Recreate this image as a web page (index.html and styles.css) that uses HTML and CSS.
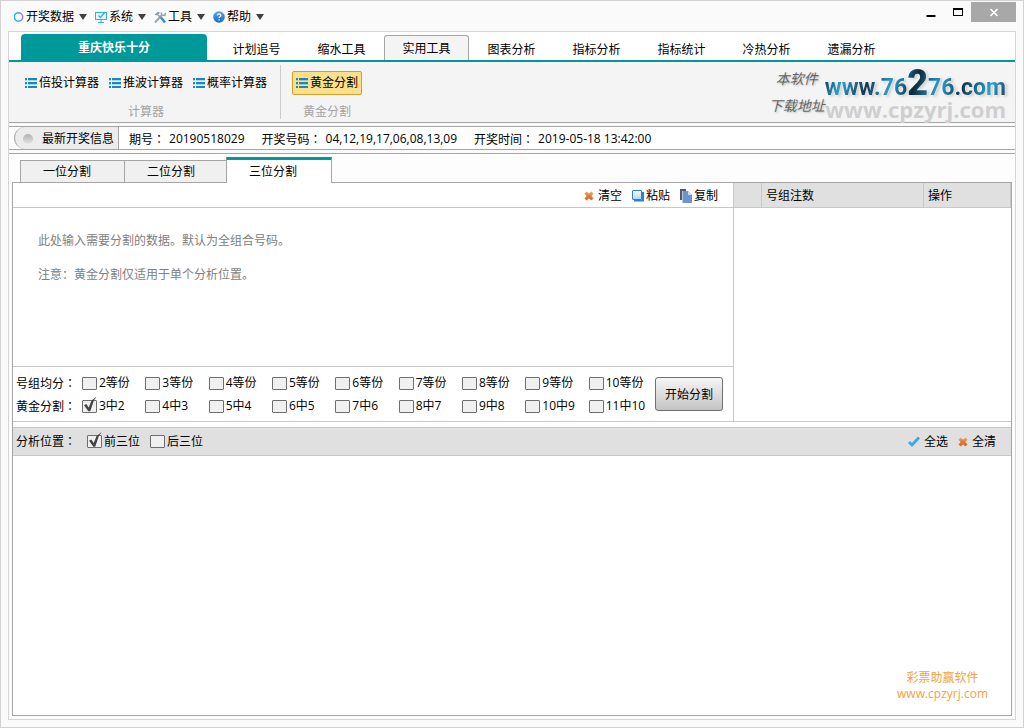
FILE: index.html
```
<!DOCTYPE html>
<html lang="zh-CN">
<head>
    <meta charset="UTF-8">
    <meta name="viewport" content="width=device-width, initial-scale=1.0">
    <title>重庆快乐十分 - 黄金分割</title>
    <link rel="stylesheet" href="styles.css">
</head>
<body>
    <!-- shared icons -->
    <svg class="sprite" aria-hidden="true">
        <defs>
            <linearGradient id="ring" x1="0" x2="1" y1="0" y2="0"><stop offset="0.3" stop-color="#1fb0f0"/><stop offset="1" stop-color="#b07be0"/></linearGradient>
            <linearGradient id="help" x1="0" x2="0" y1="0" y2="1"><stop offset="0" stop-color="#55a8ea"/><stop offset="1" stop-color="#1769bd"/></linearGradient>
            <linearGradient id="orange" x1="0" x2="0" y1="0" y2="1"><stop offset="0" stop-color="#f09a4a"/><stop offset="1" stop-color="#d9591c"/></linearGradient>
            <linearGradient id="sheet" x1="0" x2="0" y1="0" y2="1"><stop offset="0" stop-color="#ffffff"/><stop offset="1" stop-color="#a9d4fb"/></linearGradient>
        </defs>
        <symbol id="icon-list" viewBox="0 0 12 12">
            <path d="M0 1h2v2H0zM0 5h2v2H0zM0 9h2v2H0zM3 1h9v2H3zM3 5h9v2H3zM3 9h9v2H3z" fill="#1b87c0"/>
            <path d="M0 3h2v1H0zM0 7h2v1H0zM3 3h9v1H3zM3 7h9v1H3z" fill="#1b87c0" opacity="0.3"/>
        </symbol>
        <symbol id="icon-cross" viewBox="0 0 10 10">
            <path d="M1 2.6L2.6 1 5 3.2 7.4 1 9 2.6 6.9 5 9 7.4 7.4 9 5 6.8 2.6 9 1 7.4 3.1 5z" fill="url(#orange)" stroke="url(#orange)" stroke-width="0.8"/>
        </symbol>
    </svg>

    <div class="window">
        <header class="title-bar">
            <nav class="menu">
                <button class="menu-item">
                    <svg width="10" height="12" viewBox="0 0 10 12"><circle cx="4.5" cy="6" r="4.2" fill="none" stroke="url(#ring)" stroke-width="1.6"/></svg>
                    <span>开奖数据</span><i class="arrow"></i>
                </button>
                <button class="menu-item">
                    <svg width="12" height="12" viewBox="0 0 12 12"><rect x="0.5" y="1.5" width="11" height="7" fill="#e8f7ff" stroke="#35aee8"/><path d="M3 11.5h6M6 9v2" stroke="#35aee8" fill="none"/><path d="M3.5 4.5l2 2 4.5-5.5" stroke="#35aee8" stroke-width="1.4" fill="none"/></svg>
                    <span>系统</span><i class="arrow"></i>
                </button>
                <button class="menu-item">
                    <svg width="12" height="12" viewBox="0 0 12 12"><path d="M1 11.5L8 4" stroke="#9aa7b1" stroke-width="2" fill="none"/><path d="M7 1.5l1 2.5 3 .5.5-2.5" stroke="#9aa7b1" stroke-width="1.5" fill="none"/><path d="M0.5 3.5L4 .8l2 1L3 4.5z" fill="#8a99a6"/><path d="M4 4l3 3" stroke="#8a99a6" stroke-width="1.4"/><path d="M7 6.5l4 5" stroke="#2f8fd8" stroke-width="2.4"/></svg>
                    <span>工具</span><i class="arrow"></i>
                </button>
                <button class="menu-item">
                    <svg width="12" height="12" viewBox="0 0 12 12"><circle cx="6" cy="6" r="5.8" fill="url(#help)"/><path d="M4.3 4.6c0-2.4 3.6-2.3 3.5-.2 0 1.3-1.7 1.2-1.7 2.7M6.1 8.3v1.3" stroke="#fff" stroke-width="1.2" fill="none"/></svg>
                    <span>帮助</span><i class="arrow"></i>
                </button>
            </nav>
            <div class="window-buttons">
                <button aria-label="最小化"><svg width="10" height="10" viewBox="0 0 10 10"><path d="M0.5 7h9v2h-9z"/></svg></button>
                <button aria-label="最大化"><svg width="10" height="10" viewBox="0 0 10 10"><path d="M0 0h10v8H0zM1 2v5h8V2z" fill-rule="evenodd"/></svg></button>
                <button class="close" aria-label="关闭"><svg width="10" height="10" viewBox="0 0 10 10"><path d="M1.5 1l7 7M8.5 1l-7 7" stroke="#fff" stroke-width="1.6"/></svg></button>
            </div>
        </header>

        <div class="frame">
            <nav class="main-tabs">
                <button class="lottery">重庆快乐十分</button>
                <button class="main-tab">计划追号</button>
                <button class="main-tab">缩水工具</button>
                <button class="main-tab active">实用工具</button>
                <button class="main-tab">图表分析</button>
                <button class="main-tab">指标分析</button>
                <button class="main-tab">指标统计</button>
                <button class="main-tab">冷热分析</button>
                <button class="main-tab">遗漏分析</button>
            </nav>

            <div class="ribbon">
                <section class="ribbon-group calculators">
                    <div class="ribbon-items">
                        <button class="tool"><svg width="12" height="12"><use href="#icon-list"/></svg>倍投计算器</button>
                        <button class="tool"><svg width="12" height="12"><use href="#icon-list"/></svg>推波计算器</button>
                        <button class="tool"><svg width="12" height="12"><use href="#icon-list"/></svg>概率计算器</button>
                    </div>
                    <div class="ribbon-title">计算器</div>
                </section>
                <section class="ribbon-group">
                    <div class="ribbon-items">
                        <button class="tool selected"><svg width="12" height="12"><use href="#icon-list"/></svg>黄金分割</button>
                    </div>
                    <div class="ribbon-title">黄金分割</div>
                </section>
                <div class="banner">
                    <div class="banner-note"><span>本软件</span><span>下载地址</span></div>
                    <div class="banner-sites">
                        <a class="site-main" href="#">www.76<b>2</b>76.com</a>
                        <a class="site-alt" href="#">www.cpzyrj.com</a>
                    </div>
                </div>
            </div>

            <div class="draw-info">
                <div class="draw-title"><i class="dot"></i>最新开奖信息</div>
                <div class="draw-field"><span>期号<span class="colon" lang="zh-TW">：</span></span><span>20190518029</span></div>
                <div class="draw-field"><span>开奖号码<span class="colon" lang="zh-TW">：</span></span><span>04,12,19,17,06,08,13,09</span></div>
                <div class="draw-field"><span>开奖时间<span class="colon" lang="zh-TW">：</span></span><span>2019-05-18 13:42:00</span></div>
            </div>

            <main class="page">
                <nav class="page-tabs">
                    <button class="page-tab">一位分割</button>
                    <button class="page-tab">二位分割</button>
                    <button class="page-tab active">三位分割</button>
                </nav>

                <div class="panel">
                    <div class="split">
                        <div class="editor">
                            <div class="editor-toolbar">
                                <button class="action"><svg width="10" height="10"><use href="#icon-cross"/></svg>清空</button>
                                <button class="action paste"><svg width="12" height="12" viewBox="0 0 12 12"><path d="M2 10.5h9V2" fill="none" stroke="#2f7fd6" stroke-width="2"/><rect x="0.5" y="0.5" width="9" height="9" rx="0.5" fill="url(#sheet)" stroke="#2f7fd6"/></svg>粘贴</button>
                                <button class="action copy"><svg width="12" height="14" viewBox="0 0 12 14"><path d="M0 0h6v2H2v9H0z" fill="#4d5a70"/><path d="M2.5 2H8l4 4v8H2.5z" fill="#6f93cc"/><path d="M8 2v4h4z" fill="#c8d8f0"/></svg>复制</button>
                            </div>
                            <textarea class="editor-input" aria-label="需要分割的数据" placeholder="此处输入需要分割的数据。默认为全组合号码。&#10;&#10;注意：黄金分割仅适用于单个分析位置。"></textarea>
                            <div class="options">
                                <div class="option-rows">
                                    <div class="option-row">
                                        <span class="option-name">号组均分<span class="colon" lang="zh-TW">：</span></span>
                                        <div class="checks">
                                            <label class="check"><input type="checkbox">2等份</label>
                                            <label class="check"><input type="checkbox">3等份</label>
                                            <label class="check"><input type="checkbox">4等份</label>
                                            <label class="check"><input type="checkbox">5等份</label>
                                            <label class="check"><input type="checkbox">6等份</label>
                                            <label class="check"><input type="checkbox">7等份</label>
                                            <label class="check"><input type="checkbox">8等份</label>
                                            <label class="check"><input type="checkbox">9等份</label>
                                            <label class="check"><input type="checkbox">10等份</label>
                                        </div>
                                    </div>
                                    <div class="option-row">
                                        <span class="option-name">黄金分割<span class="colon" lang="zh-TW">：</span></span>
                                        <div class="checks">
                                            <label class="check"><input type="checkbox" checked>3中2</label>
                                            <label class="check"><input type="checkbox">4中3</label>
                                            <label class="check"><input type="checkbox">5中4</label>
                                            <label class="check"><input type="checkbox">6中5</label>
                                            <label class="check"><input type="checkbox">7中6</label>
                                            <label class="check"><input type="checkbox">8中7</label>
                                            <label class="check"><input type="checkbox">9中8</label>
                                            <label class="check"><input type="checkbox">10中9</label>
                                            <label class="check"><input type="checkbox">11中10</label>
                                        </div>
                                    </div>
                                </div>
                                <button class="start">开始分割</button>
                            </div>
                        </div>

                        <div class="groups">
                            <table class="group-table">
                                <thead>
                                    <tr><th class="col-index"></th><th>号组注数</th><th class="col-action">操作</th></tr>
                                </thead>
                                <tbody></tbody>
                            </table>
                        </div>
                    </div>

                    <div class="position-bar">
                        <span class="position-name">分析位置<span class="colon" lang="zh-TW">：</span></span>
                        <label class="check"><input type="checkbox" checked>前三位</label>
                        <label class="check"><input type="checkbox">后三位</label>
                        <div class="position-actions">
                            <button class="action"><svg width="12" height="12" viewBox="0 0 12 12"><path d="M1 6l3 3 7-7.5" fill="none" stroke="#42a5dc" stroke-width="2.8"/></svg>全选</button>
                            <button class="action"><svg width="10" height="10"><use href="#icon-cross"/></svg>全清</button>
                        </div>
                    </div>

                    <div class="result">
                        <div class="brand">彩票助赢软件<br>www.cpzyrj.com</div>
                    </div>
                </div>
            </main>
        </div>
    </div>
</body>
</html>
```
FILE: styles.css
```
* {
    box-sizing: border-box;
}
body {
    margin: 0;
    font-family: "Open Sans", "Noto Sans CJK SC", sans-serif;
    font-size: 12px;
    line-height: 16px;
    color: #000;
}
button {
    font: inherit;
    color: inherit;
    background: none;
    border: none;
    padding: 0;
    white-space: nowrap;
    cursor: pointer;
}
svg {
    flex: none;
    display: block;
}
.sprite {
    position: absolute;
    width: 0;
    height: 0;
}
.colon {
    font-family: "Noto Sans CJK TC", sans-serif;
}
.window {
    min-height: 100vh;
    display: flex;
    flex-direction: column;
    padding: 0 7px 7px;
    border: 1px solid #d2d2d2;
    background-color: #fafafa;
}

/* title bar */
.title-bar {
    display: flex;
    justify-content: space-between;
    height: 30px;
}
.menu {
    display: flex;
    align-items: center;
    gap: 8px;
    padding: 2px 0 0 6px;
}
.menu-item {
    display: flex;
    align-items: center;
    gap: 2px;
}
.arrow {
    margin-left: 3px;
    border: 4px solid transparent;
    border-top: 6px solid #404040;
    border-bottom: none;
}
.window-buttons {
    display: flex;
    gap: 17px;
    height: 20px;
    margin-top: 1px;
}
.window-buttons button {
    display: flex;
    align-items: center;
    justify-content: center;
    padding-top: 1px;
}
.window-buttons .close {
    width: 45px;
    margin-left: -9px;
    background-color: #a8a8a8;
}

/* main tabs */
.frame {
    flex: 1;
    display: flex;
    flex-direction: column;
    border: 1px solid #d5d5d5;
    background-color: #fafafa;
}
.main-tabs {
    display: flex;
    align-items: flex-end;
    height: 30px;
    padding-left: 12px;
    background-color: #fff;
    border-bottom: 2px solid #009999;
}
.lottery {
    width: 186px;
    height: 26px;
    padding-top: 2px;
    margin-right: 7px;
    border-radius: 4px 4px 0 0;
    background-color: #009999;
    color: #fff;
    font-weight: bold;
}
.main-tab {
    width: 85px;
    height: 25px;
    padding-top: 4px;
    border: 1px solid transparent;
    border-bottom: none;
    border-radius: 3px 3px 0 0;
}
.main-tab.active {
    padding-top: 2px;
    border-color: #a5a5a5;
    background-color: #f4f4f4;
}

/* ribbon */
.ribbon {
    display: flex;
    height: 61px;
    padding: 3px 0;
    background-color: #f4f4f4;
    border-bottom: 1px solid #a5a5a5;
}
.ribbon-group {
    padding: 0 9px 0 11px;
}
.calculators {
    padding: 0 13px 0 16px;
    border-right: 1px solid #ccc;
}
.ribbon-items {
    display: flex;
    align-items: center;
    gap: 10px;
    height: 36px;
}
.tool {
    display: flex;
    align-items: center;
    gap: 2px;
}
.tool.selected {
    height: 24px;
    padding: 0 3px;
    border: 1px solid #d1a02a;
    border-radius: 2px;
    background-color: #fae08a;
}
.ribbon-title {
    margin-top: 3px;
    text-align: center;
    color: #a3a3a3;
}
.banner {
    display: flex;
    margin-left: auto;
    padding-right: 9px;
}
.banner-note {
    display: flex;
    flex-direction: column;
    align-items: center;
    font-size: 14px;
    line-height: 27px;
    font-style: italic;
    color: #666;
    text-shadow: 1px 1px 2px #bbb;
}
.banner-sites {
    display: flex;
    flex-direction: column;
    align-items: flex-end;
}
.banner a {
    text-decoration: none;
    font-weight: bold;
}
.banner .site-main {
    padding-top: 8px;
    font-family: Roboto, sans-serif;
    font-size: 23px;
    line-height: 26px;
    color: transparent;
    background: linear-gradient(110deg, #0b2a3c, #2f9fd0 12%, #12384d 25%, #2f9fd0 38%, #0b2a3c 50%, #2f9fd0 63%, #12384d 75%, #2f9fd0 90%, #12384d);
    background-clip: text;
    filter: drop-shadow(0 0 1px #fff) drop-shadow(2px 1px 1px #ccc);
}
.site-main b {
    font-size: 36px;
    line-height: 20px;
}
.banner .site-alt {
    font-size: 22px;
    line-height: 16px;
    color: #cfcfcf;
}

/* latest draw */
.draw-info {
    display: flex;
    align-items: center;
    gap: 17px;
    height: 24px;
    margin: 3px 0;
    background-color: #fff;
    border-top: 1px solid #a5a5a5;
    border-bottom: 1px solid #a5a5a5;
}
.draw-title {
    display: flex;
    align-items: center;
    align-self: stretch;
    width: 105px;
    margin: 0 -7px 0 5px;
    padding: 2px 0 0 8px;
    gap: 9px;
    border-left: 1px solid #a5a5a5;
    border-right: 1px solid #a5a5a5;
    border-radius: 12px 0 0 12px;
    background-color: #ececec;
    white-space: nowrap;
}
.dot {
    width: 10px;
    height: 10px;
    border-radius: 50%;
    background: linear-gradient(#b0b0b0, #e4e4e4);
}
.draw-field {
    display: flex;
    gap: 4px;
    padding-top: 2px;
}

/* page */
.page {
    flex: 1;
    display: flex;
    flex-direction: column;
    padding: 3px;
    border-top: 1px solid #a5a5a5;
    background-color: #fdfdfd;
}
.page-tabs {
    display: flex;
    align-items: flex-end;
    height: 26px;
    padding-left: 8px;
    margin-bottom: -1px;
    z-index: 1;
}
.page-tab {
    width: 104px;
    height: 23px;
    padding-left: 22px;
    text-align: left;
    border: 1px solid #a5a5a5;
    border-right: none;
    background-color: #f0f0f0;
}
.page-tab.active {
    width: 106px;
    height: 26px;
    border-top: 3px solid #009999;
    border-right: 1px solid #a5a5a5;
    border-bottom: none;
    margin-left: -2px;
    background-color: #fff;
}
.panel {
    flex: 1;
    display: flex;
    flex-direction: column;
    border: 1px solid #a5a5a5;
    background-color: #fff;
}
.split {
    display: flex;
    height: 239px;
    border-bottom: 1px solid #c8c8c8;
}
.editor {
    flex: 0 0 721px;
    display: flex;
    flex-direction: column;
    border-right: 1px solid #c8c8c8;
}
.editor-toolbar {
    display: flex;
    align-items: center;
    justify-content: flex-end;
    gap: 10px;
    height: 25px;
    padding: 2px 15px 0 0;
    border-bottom: 1px solid #c8c8c8;
}
.action {
    display: flex;
    align-items: center;
    gap: 4px;
}
.action.paste,
.action.copy {
    gap: 2px;
}
.editor-input {
    flex: 1;
    width: 100%;
    padding: 24px 25px;
    border: none;
    outline: none;
    resize: none;
    font: inherit;
    line-height: 17px;
}
.editor-input::placeholder {
    color: #808080;
}
.options {
    display: flex;
    align-items: center;
    gap: 3px;
    height: 55px;
    padding-left: 3px;
    border-top: 1px solid #c8c8c8;
}
.option-rows {
    display: grid;
    gap: 6px;
    padding-top: 1px;
}
.option-row {
    display: flex;
    align-items: center;
}
.option-name {
    width: 66px;
    white-space: nowrap;
}
.checks {
    display: grid;
    grid-template-columns: repeat(9, 1fr);
    width: 570px;
}
.check {
    display: flex;
    align-items: center;
    gap: 2px;
    white-space: nowrap;
}
.check input {
    appearance: none;
    position: relative;
    width: 15px;
    height: 13px;
    margin: 0;
    border: 1px solid #6e6e6e;
    border-radius: 1px;
    background-color: #f0f0f0;
}
.check input:checked::before {
    content: "";
    position: absolute;
    left: 1px;
    top: -4px;
    width: 13px;
    height: 15px;
    background-color: #444;
    clip-path: polygon(0 58%, 18% 50%, 36% 74%, 58% 26%, 98% 0, 76% 26%, 48% 98%, 34% 98%);
}
.start {
    width: 68px;
    height: 34px;
    padding-top: 2px;
    border: 1px solid #707070;
    border-radius: 3px;
    background: linear-gradient(#f6f6f6, #c4c4c4);
}
.groups {
    flex: 1;
}
.group-table {
    width: 100%;
    border-collapse: separate;
    border-spacing: 0;
    table-layout: fixed;
}
.group-table th {
    height: 25px;
    padding: 2px 4px 0;
    font-weight: normal;
    text-align: left;
    background-color: #e0e0e0;
    border-bottom: 1px solid #c8c8c8;
    border-right: 1px solid #c8c8c8;
}
.group-table .col-index {
    width: 28px;
}
.group-table .col-action {
    width: 87px;
}

/* position bar */
.position-bar {
    display: flex;
    align-items: center;
    gap: 10px;
    height: 29px;
    margin-top: 5px;
    padding: 0 15px 0 3px;
    background-color: #e0e0e0;
    border-top: 1px solid #c8c8c8;
    border-bottom: 1px solid #c8c8c8;
}
.position-name {
    width: 61px;
}
.position-actions {
    display: flex;
    gap: 10px;
    margin-left: auto;
}
.result {
    flex: 1;
    display: flex;
    align-items: flex-end;
    justify-content: flex-end;
    padding: 13px 23px;
}
.brand {
    text-align: center;
    color: #fa9f3c;
}
```
